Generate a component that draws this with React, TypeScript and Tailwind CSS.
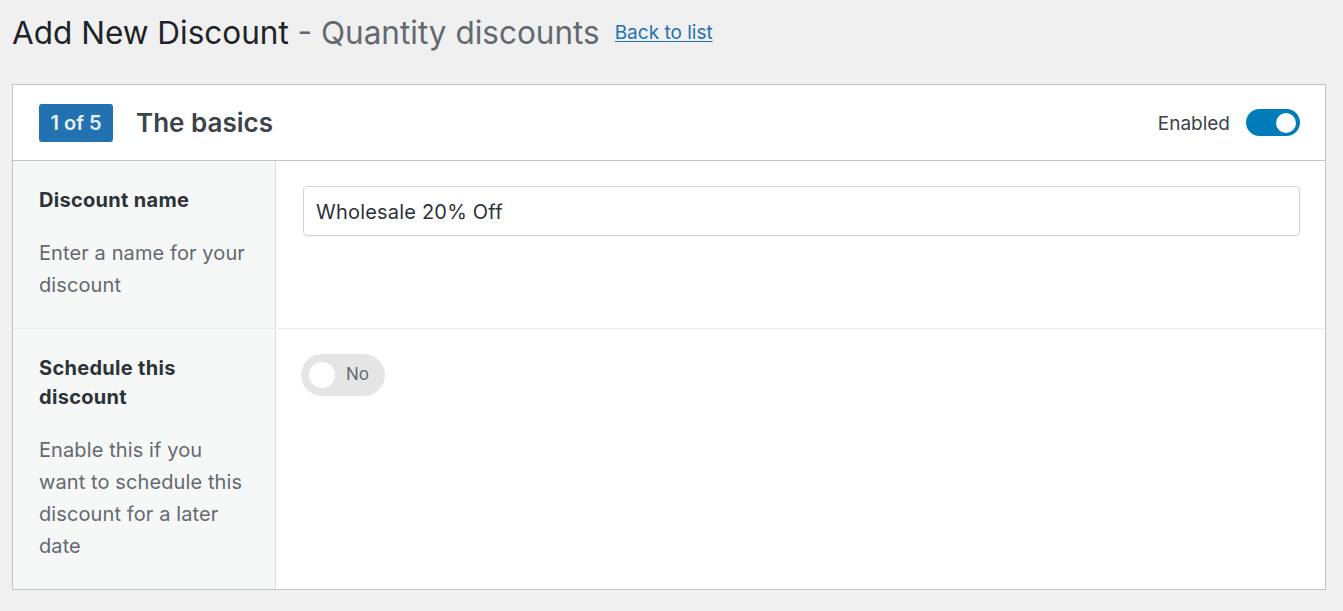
function Toggle({ on }: { on: boolean }) {
  return (
    <div
      className={
        on
          ? 'flex h-[27px] w-[54px] items-center justify-end rounded-full bg-[#007cba] px-[4px]'
          : 'flex h-[27px] w-[54px] items-center rounded-full bg-[#e2e2e2] px-[4px]'
      }
    >
      <div className="h-[20px] w-[20px] rounded-full bg-white" />
    </div>
  );
}

function FieldRow({
  label,
  description,
  children,
  last,
}: {
  label: string;
  description: string;
  children: React.ReactNode;
  last?: boolean;
}) {
  return (
    <div className={last ? 'flex' : 'flex border-b border-[#ececed]'}>
      <div className="w-[263px] shrink-0 border-r border-[#dcdcde] bg-[#f6f7f7] pt-[25px] pr-[25px] pb-[26px] pl-[26px]">
        <div className="text-[20px] leading-[29px] font-bold tracking-[0.3px] text-[#2c3338]">{label}</div>
        <div className="mt-[22px] text-[20px] leading-[32.3px] tracking-[0.1px] text-[#646970]">{description}</div>
      </div>
      <div className="flex-1 pt-[25px] pr-[25px] pl-[27px]">{children}</div>
    </div>
  );
}

export default function App() {
  return (
    <div
      className="min-h-[611px] bg-[#f0f0f1] pt-[14px] pb-[21px]"
      style={{ fontFamily: 'Inter, "Noto Sans", sans-serif' }}
    >
      <div className="flex items-center pl-[12px]">
        <h1 className="text-[31.5px] leading-[38px] text-[#1d2327]">
          Add New Discount <span className="text-[#646970]">- Quantity discounts</span>
        </h1>
        <a className="ml-[15px] text-[19px] text-[#2271b1] underline underline-offset-2" href="#">
          Back to list
        </a>
      </div>

      <div className="mt-[32px] mr-[17px] ml-[12px] border border-[#c3c4c7] bg-white">
        <div className="flex h-[76px] items-center border-b border-[#c3c4c7] pr-[25px] pl-[26px]">
          <span className="flex h-[38px] w-[74px] items-center justify-center rounded-[3px] bg-[#2271b1] text-[20px] font-semibold text-[#e8f0f8]">
            1 of 5
          </span>
          <h2 className="ml-[23px] text-[26px] font-semibold text-[#3c434a]">The basics</h2>
          <div className="ml-auto flex items-center gap-[16px]">
            <span className="pt-[3px] text-[19px] text-[#3c434a]">Enabled</span>
            <Toggle on />
          </div>
        </div>

        <FieldRow label="Discount name" description="Enter a name for your discount">
          <div className="flex h-[50px] items-center rounded-[4px] border border-[#d0d3dc] px-[12px] pt-[2px] text-[20px] tracking-[0.2px] text-[#2c3338] shadow-[0_1px_2px_rgba(0,0,0,0.05)]">
            Wholesale 20% Off
          </div>
        </FieldRow>

        <FieldRow
          label="Schedule this discount"
          description="Enable this if you want to schedule this discount for a later date"
          last
        >
          <div className="-ml-[2px] flex h-[42px] w-[84px] items-center rounded-full bg-[#e5e5e5] pl-[8px]">
            <div className="h-[26px] w-[26px] rounded-full bg-white" />
            <span className="ml-[11px] text-[17px] text-[#646970]">No</span>
          </div>
        </FieldRow>
      </div>
    </div>
  );
}
